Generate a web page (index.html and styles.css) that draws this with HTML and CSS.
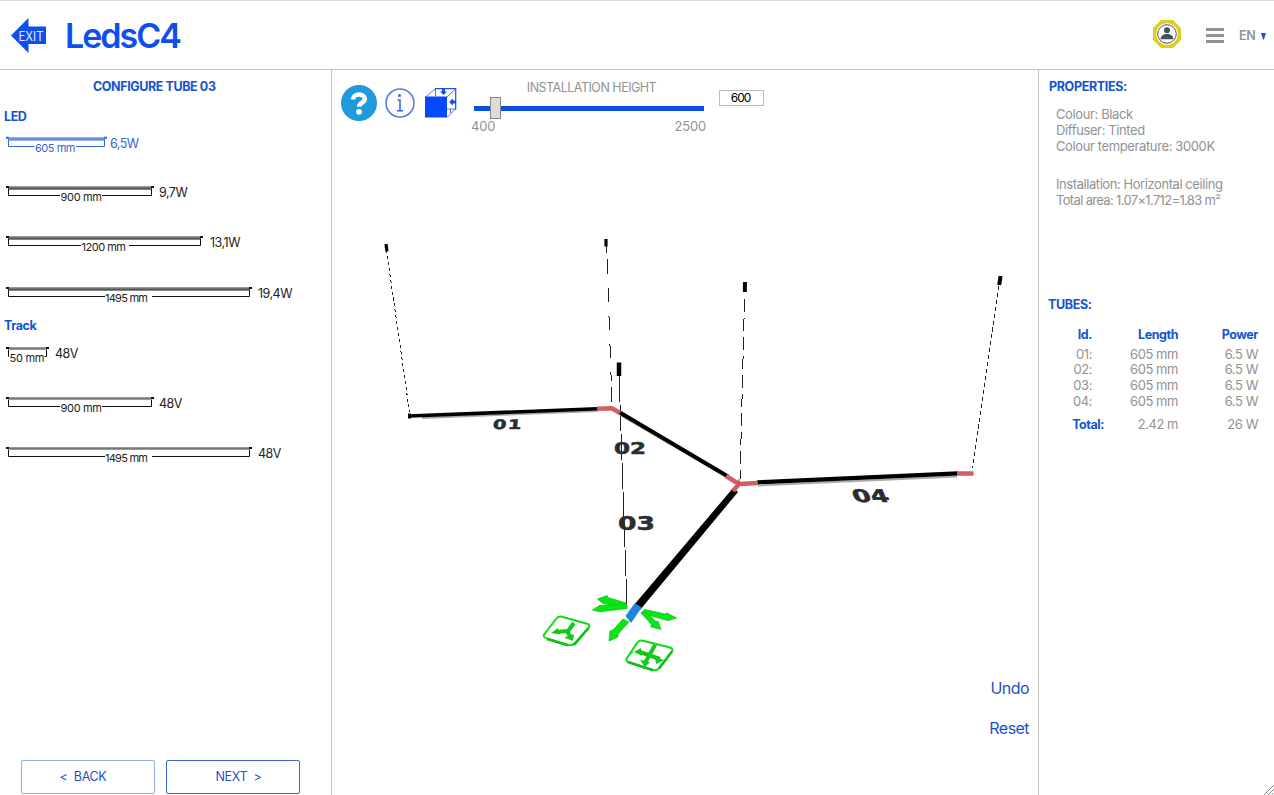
FILE: index.html
```html
<!DOCTYPE html>
<html lang="en">
<head>
<meta charset="utf-8">
<title>LedsC4 configurator</title>
<link rel="stylesheet" href="styles.css">
</head>
<body>
<div class="app">
  <header class="header">
    <svg class="exit" width="36" height="36" viewBox="0 0 36 36">
      <path d="M0 17.500 17.500 0V8.500H35V26H17.500V35Z" fill="#0d50ee"/>
      <text x="7.500" y="22.500" textLength="25" lengthAdjust="spacingAndGlyphs" font-size="13.500" fill="#e4ecff">EXIT</text>
    </svg>
    <svg class="logo" width="118" height="34" viewBox="0 0 118 34">
      <text x="-1" y="29" textLength="117" font-size="34" font-weight="600" fill="#0d50ee">LedsC4</text>
    </svg>
    <div class="header-tools">
      <svg class="user" width="28" height="28" viewBox="0 0 28 28">
        <path d="M8 0H20L28 8V20L20 28H8L0 20V8Z" fill="#e0cd22"/>
        <circle cx="14" cy="14" r="10.800" fill="#fff"/>
        <circle cx="14" cy="14" r="9.300" fill="#fff" stroke="#4a545e" stroke-width="1"/>
        <circle cx="14" cy="10.300" r="3" fill="#46505b"/>
        <path d="M7.500 19.300C8 15.500 10.500 14 14 14S20 15.500 20.500 19.300Z" fill="#46505b"/>
      </svg>
      <div class="burger"><i></i><i></i><i></i></div>
      <span class="lang">EN</span>
      <svg class="caret" width="5" height="7" viewBox="0 0 5 7"><path d="M0 0H5L3 6.500H2Z" fill="#1b52dc"/></svg>
    </div>
  </header>
  <main class="main">
    <aside class="left">
      <h1 class="title">CONFIGURE TUBE 03</h1>
      <h2 class="group led">LED</h2>
      <div class="tubes">
        <div class="tube active">
          <svg width="102" height="18" viewBox="0 0 102 18"><path class="bar-led" d="M2 2.500H99"/><path class="edge" d="M2 4H99"/><path class="cap" d="M0 1.800H3M98 1.800H101"/><path class="dim" d="M2.500 4V10.500H28.500M70 10.500H98.500V4"/><text x="29" y="15.700" textLength="40.500">605 mm</text></svg>
          <span class="watt w4">6,5W</span>
        </div>
        <div class="tube">
          <svg width="148" height="18" viewBox="0 0 148 18"><path class="bar" d="M2 2.500H146"/><path class="edge" d="M2 4H146"/><path class="cap" d="M0 2H3M145 2H148"/><path class="dim" d="M2.500 4V10.500H54M96 10.500H145.500V4"/><text x="54.500" y="15.700" textLength="41.500">900 mm</text></svg>
          <span class="watt">9,7W</span>
        </div>
        <div class="tube">
          <svg width="197" height="18" viewBox="0 0 197 18"><path class="bar" d="M2 2.500H195"/><path class="edge" d="M2 4H195"/><path class="cap" d="M0 2H3M194 2H197"/><path class="dim" d="M2.500 4V10.500H75M123 10.500H194.500V4"/><text x="75.500" y="15.700" textLength="44.500">1200 mm</text></svg>
          <span class="watt w7">13,1W</span>
        </div>
        <div class="tube">
          <svg width="246" height="18" viewBox="0 0 246 18"><path class="bar" d="M2 2.500H244"/><path class="edge" d="M2 4H244"/><path class="cap" d="M0 2H3M243 2H246"/><path class="dim" d="M2.500 4V10.500H99M146 10.500H243.500V4"/><text x="99" y="15.700" textLength="43">1495 mm</text></svg>
          <span class="watt wl">19,4W</span>
        </div>
      </div>
      <h2 class="group track">Track</h2>
      <div class="tubes">
        <div class="tube">
          <svg width="44" height="18" viewBox="0 0 44 18"><path class="bar" d="M2 2.500H41"/><path class="cap" d="M0 2H3M40 2H43"/><path class="dim" d="M2.500 4V10.500H3M38.500 10.500H40.500V4"/><text x="3.500" y="15.700" textLength="35">50 mm</text></svg>
          <span class="watt">48V</span>
        </div>
        <div class="tube">
          <svg width="148" height="18" viewBox="0 0 148 18"><path class="bar" d="M2 2.500H146"/><path class="cap" d="M0 2H3M145 2H148"/><path class="dim" d="M2.500 4V10.500H54M96 10.500H145.500V4"/><text x="54.500" y="15.700" textLength="41.500">900 mm</text></svg>
          <span class="watt">48V</span>
        </div>
        <div class="tube">
          <svg width="246" height="18" viewBox="0 0 246 18"><path class="bar" d="M2 2.500H244"/><path class="cap" d="M0 2H3M243 2H246"/><path class="dim" d="M2.500 4V10.500H99M146 10.500H243.500V4"/><text x="99" y="15.700" textLength="43">1495 mm</text></svg>
          <span class="watt wl">48V</span>
        </div>
      </div>
      <div class="nav">
        <button class="btn back">&lt;&nbsp; BACK</button>
        <button class="btn next">NEXT &nbsp;&gt;</button>
      </div>
    </aside>
    <section class="center">
      <div class="toolbar">
        <svg class="help" width="36" height="36" viewBox="0 0 36 36"><circle cx="18" cy="18" r="18" fill="#1f9ade"/><path d="M12 14.500C12 7.800 23.800 7.800 23.800 14C23.800 17.800 18 17.800 18 21.800" fill="none" stroke="#fff" stroke-width="4.500"/><circle cx="18" cy="26.800" r="2.900" fill="#fff"/></svg>
        <svg class="info" width="30" height="30" viewBox="0 0 30 30"><circle cx="15" cy="15" r="14" fill="#fff" stroke="#5b7bdc" stroke-width="1.600"/><circle cx="14.500" cy="7.500" r="1.500" fill="#3663dc"/><path d="M12.500 12H15V22.500M12 22.800H18" fill="none" stroke="#3663dc" stroke-width="1.500"/></svg>
        <svg class="cube" width="32" height="30" viewBox="0 0 32 30"><path d="M22 9 31 1V21L22 29Z" fill="#fff"/><path d="M.500 9 10.500 .700M22 9 30.500 1M10.500 1V8.500M22 21H30.500L22 29.500M25.500 21V25" fill="none" stroke="#5272d4"/><path d="M10 .700H30.700V21.500" fill="none" stroke="#174fe6" stroke-width="1.200"/><rect y="8.500" width="22" height="21" fill="#0449fb"/><path d="M17 1H20V3.500H22L18.500 7 15 3.500H17ZM31 12.500V15.500H28V17.500L24 14 28 10.500V12.500Z" fill="#174fe6"/></svg>
        <div class="slider">
          <div class="slider-label">INSTALLATION HEIGHT</div>
          <div class="rail"><div class="thumb"></div></div>
          <div class="range"><span>400</span><span>2500</span></div>
        </div>
        <div class="value">600</div>
      </div>
      <svg class="scene" width="706" height="655" viewBox="332 140 706 655">
        <g stroke="#222" fill="none" stroke-width="1" shape-rendering="crispEdges">
          <path d="M386.500 250 409.500 412" stroke-dasharray="3 3"/>
          <path d="M606.500 244 612 404" stroke-dasharray="9 6 15 14 14 14 14 14 14 14"/>
          <path d="M744.500 299 740 480" stroke-dasharray="13 6"/>
          <path d="M999 286 972.500 468" stroke-dasharray="4 3"/>
          <path d="M619 376 627 604" stroke-dasharray="26 3"/>
        </g>
        <g stroke="#050505" stroke-width="3.200">
          <path d="M386 244 387 251.500M606 239V246.500"/><path d="M745 282 744.800 292M1000.600 276 999.200 285" stroke-width="4"/><path d="M619 362.500V376" stroke-width="4.500"/>
        </g>
        <g stroke="#aaa" stroke-width="2"><path d="M422 418 598 411M758 485.500 957 476.500M620 415 725 476M726 502 636 606"/></g>
        <g fill="none" stroke="#000"><path d="M409 416 597 408.800" stroke-width="3.600"/><path d="M409.500 413.500V418.500" stroke-width="3"/><path d="M619 412 728 476.500" stroke-width="4"/><path d="M757 482.300 958 473.400" stroke-width="4.200"/></g>
        <path d="M733 488 738 492 640 610 634 605Z" fill="#000"/>
        <g fill="none" stroke="#d25e63" stroke-width="4.600" stroke-linejoin="round"><path d="M597 408.800 612 408.300 620 413"/><path d="M726 476 739 484 758 483M739 484 733 491"/><path d="M957 473.500H973.500" stroke-width="4.500"/></g>
        <path d="M739 479V484" stroke="#913d42"/>
        <g class="plates" font-family="DejaVu Sans" font-weight="bold" fill="#2b2d30" stroke="#2b2d30" stroke-width=".5">
          <text transform="translate(492.500 429) skewX(-6) scale(1.500 1)" font-size="13" textLength="19" lengthAdjust="spacing">01</text>
          <text x="614" y="454" font-size="15.500" textLength="32" lengthAdjust="spacingAndGlyphs">02</text>
          <text x="618" y="529.500" font-size="20" textLength="37" lengthAdjust="spacingAndGlyphs">03</text>
          <text transform="translate(850 501.500) skewX(22)" font-size="17.500" textLength="36" lengthAdjust="spacingAndGlyphs" x="5">04</text>
        </g>
        <path d="M627 616 635 605 640 608 631 621Z" stroke="#1d84df" stroke-width="2.500" fill="#1d84df"/>
        <g fill="#0ae514" stroke="#13c41a" stroke-width=".8" stroke-linejoin="round">
          <path d="M623 619 629 622 618 634 618 637 609 641 610 631 613 630Z"/>
          <path d="M626 603 608 597.500 607 595.500 597.500 599 603 603.500 626 608.500Z"/>
          <path d="M627 604.500 602 605.500 600 605 592.500 610 601 612 602 611.500 627 608.500Z"/>
          <path d="M645 609.500 665 614 667 613 676.500 618 668 620.500 664 619.500 641 613Z"/>
          <path d="M641 613 652 625 650 626.500 661 629.500 658 621 656 621.500 646 612Z"/>
        </g>
        <g fill="none" stroke="#0bdc16" stroke-width="2" stroke-linejoin="round">
          <path d="M561 616.500 588 624Q590.500 625 588.500 628L575 643Q572 646 568 645L547 638.500Q542 637 544.500 634L556 619Q558 616 561 616.500Z"/>
          <path d="M642 640.500 670 647.500Q674 649 671.500 652L659 668Q657 671 653 670L629 662.500Q625 661 627 658L637 643Q639 640 642 640.500Z"/>
          <path d="M574 645 588.500 628M547 639 568 645.300M659 668.500 672 651.500M628 662 653 670.300" stroke="#0fbf18" stroke-width="2.600"/>
          <path d="M643 669 645 664M656 646 657 643M627 657 633 652M664 660 668 656" stroke-width="1"/>
          <g stroke="#10c91a" stroke-width="4"><path d="M574 623 568 631 556 632M567 631 571 638M655 645 645 663M640 652 660 659"/></g>
        </g>
        <g fill="#10c91a"><path d="M551 633 558 628 560 634.500ZM564 637.500 574 634 573 641ZM634 652 641 648 642 656ZM655 657 664 660 656 664ZM640 660 650 662 645 667Z"/></g>
      </svg>
      <div class="actions"><a>Undo</a><a>Reset</a></div>
    </section>
    <aside class="right">
      <h2 class="heading">PROPERTIES:</h2>
      <div class="props">
        <p>Colour: Black</p><p>Diffuser: Tinted</p><p>Colour temperature: 3000K</p>
        <p class="p4">Installation: Horizontal ceiling</p><p class="p5">Total area: 1.07×1.712=1.83 m²</p>
      </div>
      <h2 class="heading tubes-heading">TUBES:</h2>
      <div class="table">
        <b>Id.</b><b>Length</b><b>Power</b>
        <span>01:</span><span>605 mm</span><span>6.5 W</span>
        <span>02:</span><span>605 mm</span><span>6.5 W</span>
        <span>03:</span><span>605 mm</span><span>6.5 W</span>
        <span>04:</span><span>605 mm</span><span>6.5 W</span>
      </div>
      <div class="table total"><b>Total:</b><span>2.42 m</span><span>26 W</span></div>
      <svg class="grip" width="10" height="10" viewBox="0 0 10 10"><path d="M0 10 10 0M4 10 10 4M7.500 10 10 7.500" stroke="#888" fill="none"/></svg>
    </aside>
  </main>
</div>
</body>
</html>
```
FILE: styles.css
```css
* { box-sizing: border-box; }
body { margin: 0; font-family: Inter, "Liberation Sans", sans-serif; font-size: 13px; color: #929292; background: #fff; }
h1, h2, p { margin: 0; }
svg { display: block; flex: none; }
.app { width: 1274px; height: 795px; display: flex; flex-direction: column; overflow: hidden; }
.header { height: 70px; flex: none; display: flex; align-items: flex-start; border-top: 1px solid #dcdcdc; border-bottom: 1px solid #c4c4c4; padding-left: 11px; }
.exit { margin-top: 17px; overflow: visible; }
.logo { margin: 18px 0 0 19px; overflow: visible; }
.header-tools { margin-left: auto; padding: 19px 8px 0 0; display: flex; }
.burger { width: 18px; margin: 8px 15px 0 25px; display: flex; flex-direction: column; gap: 3px; }
.burger i { height: 3px; background: #929292; }
.lang { width: 17px; line-height: 16px; margin: 8px 5px 0 0; font-size: 12.500px; font-weight: 600; letter-spacing: -.2px; }
.caret { margin-top: 13px; }
.main { flex: 1; display: grid; grid-template-columns: 332px 706px 236px; min-height: 0; }
.left { border-right: 1px solid #c4c4c4; display: flex; flex-direction: column; padding-top: 9px; }
.title, .group, .heading { color: #1453cf; font-weight: 700; font-size: 12.500px; line-height: 16px; }
.title { padding-left: 93px; letter-spacing: -.4px; white-space: nowrap; }
.group { padding-left: 4px; letter-spacing: -.4px; }
.led { margin-top: 14px; }
.tubes { padding: 11px 0 0 6px; }
.tube { display: flex; height: 50.300px; gap: 5px; color: #222; }
.tube text { font-size: 11px; fill: #222; }
.tube.active { color: #3566d3; height: 49px; }
.tube.active text { fill: #3566d3; }
.w4 { margin-left: -3px; }
.w7 { margin-left: 2px; }
.wl { margin-left: 1px; }
.watt { line-height: 16px; font-size: 12.500px; letter-spacing: -.5px; }
.bar, .bar-led, .edge, .cap, .dim { fill: none; stroke: #111; }
.bar { stroke: #777; stroke-width: 2.400px; }
.bar-led { stroke: #7292e8; stroke-width: 2.400px; }
.cap { stroke-width: 2px; }
.active .edge, .active .cap, .active .dim { stroke: #3566d3; }
.track { margin-top: -18px; }
.track + .tubes { padding-top: 12px; }
.nav { margin-top: auto; padding: 0 0 1px 21px; display: flex; gap: 11px; }
.btn { width: 134px; height: 34px; background: #fff; border: 1px solid #3a68c4; border-radius: 2px; font: 12.500px Inter, sans-serif; letter-spacing: -.35px; color: #1b52c8; padding: 0 0 2px; }
.back { border-color: #93aee0; padding-right: 10px; }
.next { padding-left: 11px; }
.center { position: relative; display: flex; flex-direction: column; }
.toolbar { height: 70px; display: flex; padding-left: 9px; flex: none; }
.help { margin-top: 15px; }
.info { margin: 18px 10px 0 8px; }
.cube { margin-top: 18px; }
.slider { width: 236px; margin-left: 14px; padding-top: 10px; }
.slider-label { text-align: center; line-height: 16px; font-size: 12.500px; letter-spacing: -.5px; padding-left: 5px; }
.rail { height: 5px; margin: 10px 3px 0; background: #0b4fe8; display: flex; align-items: center; }
.thumb { margin-left: 16px; width: 11px; height: 22px; flex: none; background: #dcdcdc; border: 1px solid #888; position: relative; top: -1px; }
.range { display: flex; justify-content: space-between; line-height: 16px; margin: 7px 1px 0 0; letter-spacing: -.2px; }
.value { margin: 20px 0 0 12px; width: 45px; height: 16px; border: 1px solid #bbb; color: #000; line-height: 14px; font-size: 12px; text-align: center; letter-spacing: -1px; padding-right: 2px; }
.actions { position: absolute; right: 9px; top: 608px; display: flex; flex-direction: column; align-items: flex-end; gap: 20px; font-size: 16px; line-height: 20px; color: #1b52c8; letter-spacing: -.55px; }
.right { border-left: 1px solid #c4c4c4; padding: 9px 0 0 9px; display: flex; flex-direction: column; }
.heading { letter-spacing: -.35px; padding-left: 1px; }
.props { padding: 11px 0 0 8px; line-height: 16px; letter-spacing: -.38px; white-space: nowrap; }
.p4 { margin-top: 22px; letter-spacing: -.43px; }
.p5 { letter-spacing: -.66px; }
.tubes-heading { margin-top: 89px; padding-left: 0; }
.table { margin-top: 14px; display: grid; grid-template-columns: 44px 86px 80px; line-height: 15.700px; text-align: right; letter-spacing: -.45px; }
.table b { color: #1453cf; font-weight: 700; font-size: 12.500px; margin-bottom: 4px; }
.table.total { margin-top: 7px; }
.total b { margin-right: -12px; }
.grip { margin: auto 0 0 auto; }
```
